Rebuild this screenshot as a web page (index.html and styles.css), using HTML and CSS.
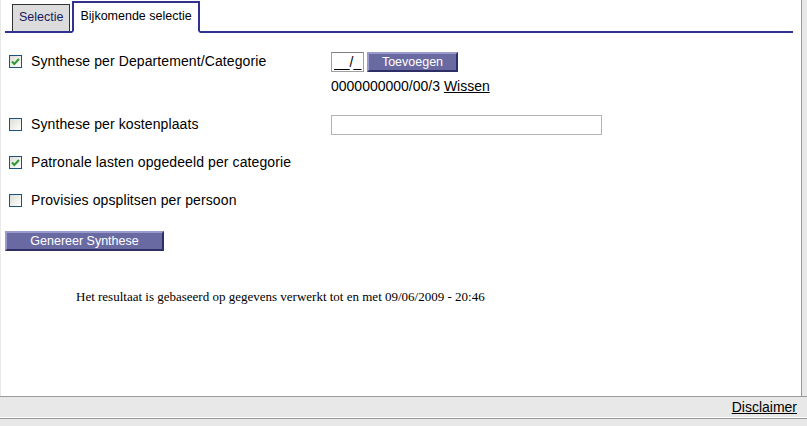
FILE: index.html
```html
<!DOCTYPE html>
<html lang="nl">
<head>
    <meta charset="UTF-8">
    <title>Bijkomende selectie</title>
    <link rel="stylesheet" href="styles.css">
</head>
<body>
    <div class="panel">
        <div class="tabs">
            <div class="tab">Selectie</div>
            <div class="tab active">Bijkomende selectie</div>
        </div>

        <div class="form">
            <div class="row row-first">
                <div class="left">
                    <span class="check on">
                        <svg width="11" height="11" viewBox="0 0 11 11"><path d="M2 5.5 L4.3 8 L9 3" fill="none" stroke="#2f9a2f" stroke-width="2"/></svg>
                    </span>
                    <span class="label">Synthese per Departement/Categorie</span>
                </div>
                <div class="right">
                    <div class="controls">
                        <input class="small-input" type="text" value="__/_">
                        <button class="btn">Toevoegen</button>
                    </div>
                    <div class="code">0000000000/00/3 <a href="#">Wissen</a></div>
                </div>
            </div>

            <div class="row row-second">
                <div class="left">
                    <span class="check"></span>
                    <span class="label">Synthese per kostenplaats</span>
                </div>
                <div class="right">
                    <input class="wide-input" type="text">
                </div>
            </div>

            <div class="row row-third">
                <div class="left">
                    <span class="check on">
                        <svg width="11" height="11" viewBox="0 0 11 11"><path d="M2 5.5 L4.3 8 L9 3" fill="none" stroke="#2f9a2f" stroke-width="2"/></svg>
                    </span>
                    <span class="label">Patronale lasten opgedeeld per categorie</span>
                </div>
            </div>

            <div class="row row-third">
                <div class="left">
                    <span class="check"></span>
                    <span class="label">Provisies opsplitsen per persoon</span>
                </div>
            </div>

            <button class="btn btn-generate">Genereer Synthese</button>

            <p class="note">Het resultaat is gebaseerd op gegevens verwerkt tot en met 09/06/2009 - 20:46</p>
        </div>
    </div>

    <div class="footer">
        <a href="#">Disclaimer</a>
    </div>
    <div class="footer-bottom"></div>
</body>
</html>
```

FILE: styles.css
```css
:root {
    --color-navy: #31318f;
    --color-button: #6a6aa2;
    --color-gray: #e8e8e8;
    --color-line: #999999;
}

* {
    margin: 0;
    padding: 0;
    box-sizing: border-box;
}

body {
    background-color: var(--color-gray);
    font-family: 'Liberation Sans', Arial, sans-serif;
    font-size: 14px;
    color: black;
    width: 807px;
    height: 426px;
    overflow: hidden;
}

.panel {
    margin-left: 1px;
    width: 801px;
    height: 396px;
    background-color: white;
    border-right: 1px solid var(--color-line);
}

.tabs {
    display: flex;
    align-items: flex-end;
    height: 33px;
    margin-left: 4px;
    width: 788px;
    border-bottom: 2px solid var(--color-navy);
}

.tab {
    height: 27px;
    margin-left: 7px;
    padding: 0 6px;
    background-color: #dcdcdc;
    border: 1px solid #333333;
    border-bottom: none;
    color: #1a1a5e;
    font-size: 12.5px;
    line-height: 25px;
}

.tab.active {
    height: 32px;
    margin-left: 2px;
    margin-bottom: -2px;
    padding: 0 6px;
    background-color: white;
    border: 2px solid var(--color-navy);
    border-bottom: 2px solid white;
    color: black;
    line-height: 27px;
}

.form {
    padding-left: 4px;
}

.row {
    display: flex;
}

.row-first {
    margin-top: 19px;
}

.row-second {
    margin-top: 21px;
}

.row-third {
    margin-top: 18px;
}

.left {
    width: 326px;
    display: flex;
    align-items: flex-start;
    height: 20px;
}

.check {
    width: 13px;
    height: 13px;
    margin: 3px 0 0 4px;
    border: 1px solid #1c5180;
    background: linear-gradient(135deg, #dcdcd7, #ffffff);
    display: flex;
    align-items: center;
    justify-content: center;
}

.label {
    margin-left: 9px;
    line-height: 18px;
    letter-spacing: 0.1px;
}

.controls {
    display: flex;
    gap: 3px;
}

.small-input {
    width: 33px;
    height: 20px;
    border: 1px solid #a0a0a0;
    border-top-color: #808080;
    font-family: 'Liberation Sans', Arial, sans-serif;
    font-size: 14px;
    padding-left: 2px;
}

.wide-input {
    width: 271px;
    height: 20px;
    border: 1px solid #b4b4b4;
}

.btn {
    height: 20px;
    background-color: var(--color-button);
    color: white;
    font-family: 'Liberation Sans', Arial, sans-serif;
    font-size: 12.5px;
    border: 2px solid;
    border-color: #9a9acc #2e2e66 #2e2e66 #9a9acc;
}

.controls .btn {
    width: 91px;
}

.code {
    margin-top: 6px;
    line-height: 16px;
}

.code a,
.footer a {
    color: black;
}

.btn-generate {
    display: block;
    margin-top: 20px;
    width: 159px;
}

.note {
    margin: 38px 0 0 71px;
    font-family: 'Liberation Serif', 'Times New Roman', serif;
    font-size: 13px;
}

.footer {
    height: 22px;
    border-top: 1px solid var(--color-line);
    border-bottom: 1px solid white;
    text-align: right;
    padding-right: 10px;
    line-height: 21px;
}

.footer-bottom {
    border-top: 1px solid var(--color-line);
}
```
